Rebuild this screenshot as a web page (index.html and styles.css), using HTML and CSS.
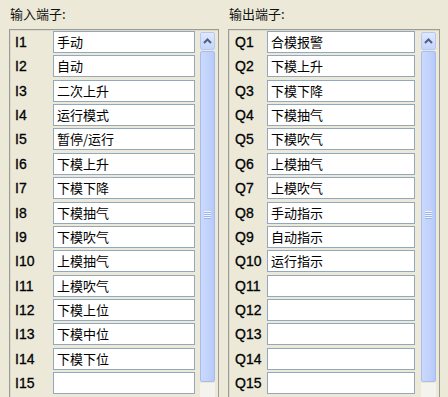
FILE: index.html
```html
<!DOCTYPE html>
<html>
<head>
  <title>端子设置</title>
  <link rel="stylesheet" href="styles.css">
</head>
<body>
  <div class="panes">
    <section class="pane pane-in">
      <div class="pane-title">输入端子:</div>
      <div class="frame">
        <div class="rows">
          <div class="row"><span class="tag">I1</span><div class="box">手动</div></div>
          <div class="row"><span class="tag">I2</span><div class="box">自动</div></div>
          <div class="row"><span class="tag">I3</span><div class="box">二次上升</div></div>
          <div class="row"><span class="tag">I4</span><div class="box">运行模式</div></div>
          <div class="row"><span class="tag">I5</span><div class="box">暂停/运行</div></div>
          <div class="row"><span class="tag">I6</span><div class="box">下模上升</div></div>
          <div class="row"><span class="tag">I7</span><div class="box">下模下降</div></div>
          <div class="row"><span class="tag">I8</span><div class="box">下模抽气</div></div>
          <div class="row"><span class="tag">I9</span><div class="box">下模吹气</div></div>
          <div class="row"><span class="tag">I10</span><div class="box">上模抽气</div></div>
          <div class="row"><span class="tag">I11</span><div class="box">上模吹气</div></div>
          <div class="row"><span class="tag">I12</span><div class="box">下模上位</div></div>
          <div class="row"><span class="tag">I13</span><div class="box">下模中位</div></div>
          <div class="row"><span class="tag">I14</span><div class="box">下模下位</div></div>
          <div class="row"><span class="tag">I15</span><div class="box"></div></div>
        </div>
        <div class="scroll">
          <div class="scroll-btn">
            <svg width="9" height="6" viewBox="0 0 9 6"><path d="M1 5 L4.5 1.5 L8 5" fill="none" stroke="#4d6185" stroke-width="2"/></svg>
          </div>
          <div class="scroll-thumb"><span class="grip"></span></div>
          <div class="scroll-track"></div>
        </div>
      </div>
    </section>

    <section class="pane pane-out">
      <div class="pane-title">输出端子:</div>
      <div class="frame">
        <div class="rows">
          <div class="row"><span class="tag">Q1</span><div class="box">合模报警</div></div>
          <div class="row"><span class="tag">Q2</span><div class="box">下模上升</div></div>
          <div class="row"><span class="tag">Q3</span><div class="box">下模下降</div></div>
          <div class="row"><span class="tag">Q4</span><div class="box">下模抽气</div></div>
          <div class="row"><span class="tag">Q5</span><div class="box">下模吹气</div></div>
          <div class="row"><span class="tag">Q6</span><div class="box">上模抽气</div></div>
          <div class="row"><span class="tag">Q7</span><div class="box">上模吹气</div></div>
          <div class="row"><span class="tag">Q8</span><div class="box">手动指示</div></div>
          <div class="row"><span class="tag">Q9</span><div class="box">自动指示</div></div>
          <div class="row"><span class="tag">Q10</span><div class="box">运行指示</div></div>
          <div class="row"><span class="tag">Q11</span><div class="box"></div></div>
          <div class="row"><span class="tag">Q12</span><div class="box"></div></div>
          <div class="row"><span class="tag">Q13</span><div class="box"></div></div>
          <div class="row"><span class="tag">Q14</span><div class="box"></div></div>
          <div class="row"><span class="tag">Q15</span><div class="box"></div></div>
        </div>
        <div class="scroll">
          <div class="scroll-btn">
            <svg width="9" height="6" viewBox="0 0 9 6"><path d="M1 5 L4.5 1.5 L8 5" fill="none" stroke="#4d6185" stroke-width="2"/></svg>
          </div>
          <div class="scroll-thumb"><span class="grip"></span></div>
          <div class="scroll-track"></div>
        </div>
      </div>
    </section>
  </div>
</body>
</html>
```

FILE: styles.css
```css
html, body {
  margin: 0;
  height: 397px;
  overflow: hidden;
}

body {
  background-color: #ece9d8;
  font-family: "Liberation Sans", "Noto Sans CJK SC", sans-serif;
  color: #222;
  padding: 0 0 0 9px;
  box-sizing: border-box;
}

.panes {
  display: flex;
  gap: 9px;
}

.pane-title {
  height: 29px;
  box-sizing: border-box;
  padding: 5px 0 0 1px;
  line-height: 18px;
  font-size: 13px;
  font-family: "Noto Sans CJK SC", sans-serif;
  color: #111;
}

/* group frame around the terminal list */
.frame {
  display: flex;
  height: 390px;
  box-sizing: border-box;
  border: 1px solid #9c9b94;
  box-shadow: inset 1px 1px 0 #dcd9cb;
  padding: 1px 2px 0 1px;
}
.pane-in .frame { width: 210px; }
.pane-out .frame { width: 212px; }

.rows {
  display: flex;
  flex-direction: column;
  gap: 2.36px;
}

.row {
  display: flex;
  align-items: center;
  height: 22px;
}

.tag {
  font-size: 14px;
  padding-left: 4px;
  box-sizing: border-box;
  color: #000;
  -webkit-text-stroke: 0.3px #000;
}
.pane-in .tag { width: 42px; }
.pane-out .tag { width: 37px; padding-left: 5px; }

.box {
  height: 22px;
  box-sizing: border-box;
  border: 1px solid #93a7bd;
  background-color: #fff;
  padding-left: 3px;
  line-height: 20px;
  font-size: 13px;
  font-family: "Noto Sans CJK SC", sans-serif;
  color: #000;
}
.pane-in .box { width: 142px; }
.pane-out .box { width: 148px; }

/* XP style scrollbar */
.scroll {
  display: flex;
  flex-direction: column;
  width: 15px;
  margin-top: 1px;
  gap: 1px;
}
.pane-in .scroll { margin-left: 5px; }
.pane-out .scroll { margin-left: 6px; }

.scroll-btn {
  height: 18px;
  box-sizing: border-box;
  border: 1px solid #b7c9f2;
  border-radius: 2px;
  background: linear-gradient(#dfe8fd, #c4d4fb);
  display: flex;
  align-items: center;
  justify-content: center;
}

.scroll-thumb {
  height: 331px;
  box-sizing: border-box;
  border: 1px solid #a7bdf2;
  border-radius: 2px;
  background: linear-gradient(90deg, #cbd9fd, #c0d1fb 60%, #b6c9f7);
  display: flex;
  align-items: center;
  justify-content: center;
  padding-bottom: 4px;
}

.grip {
  width: 7px;
  height: 8px;
  background: repeating-linear-gradient(#eef3ff 0 1px, #9fb5ea 1px 2px);
}

.scroll-track {
  flex: 1;
  background-color: #f4f3ee;
}
```
